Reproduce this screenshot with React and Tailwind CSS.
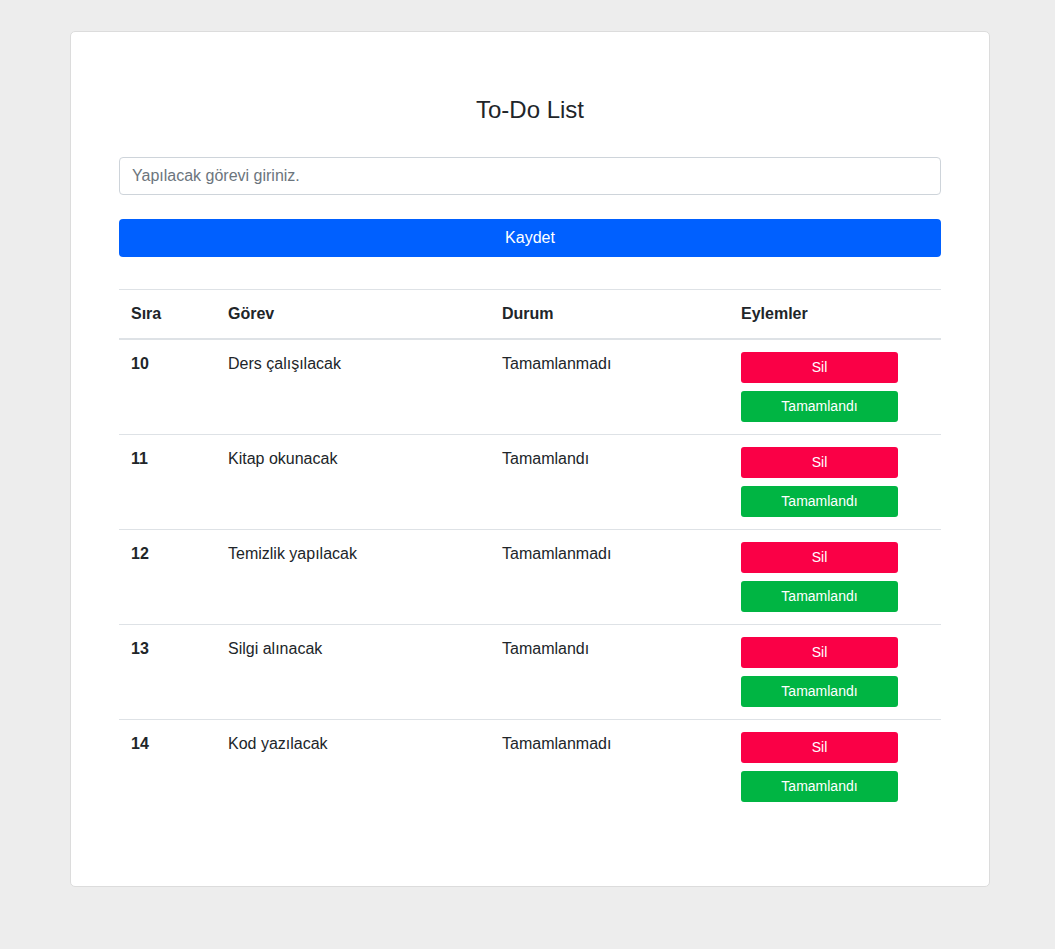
import React from 'react'

const todos = [
  { id: 10, task: 'Ders çalışılacak', status: 'Tamamlanmadı' },
  { id: 11, task: 'Kitap okunacak', status: 'Tamamlandı' },
  { id: 12, task: 'Temizlik yapılacak', status: 'Tamamlanmadı' },
  { id: 13, task: 'Silgi alınacak', status: 'Tamamlandı' },
  { id: 14, task: 'Kod yazılacak', status: 'Tamamlanmadı' },
]

const App = () => {
  return (
    <div
      className="min-h-screen bg-[#ededed] pt-[31px] pb-[63px] text-[#212529]"
      style={{ fontFamily: '"Liberation Sans", Arial, sans-serif' }}
    >
      <div className="ml-[70px] w-[920px] rounded-[5px] border border-[#dcdcdc] bg-white px-[48px] pt-[63px] pb-[72px]">
        <h4 className="text-center text-[24px] leading-[29px]">To-Do List</h4>

        <input
          className="mt-[33px] block h-[38px] w-full rounded-[4px] border border-[#ced4da] px-3 text-[16px] placeholder-[#6c757d] outline-none"
          placeholder="Yapılacak görevi giriniz."
        />

        <button className="mt-[24px] block h-[38px] w-full rounded-[4px] bg-[#0060ff] text-[16px] text-white">
          Kaydet
        </button>

        <table className="mt-[32px] w-full border-collapse text-[16px]">
          <thead>
            <tr className="border-t border-b-2 border-t-[#dee2e6] border-b-[#dee2e6] text-left">
              <th className="w-[97px] px-3 py-[12px] font-bold leading-6">Sıra</th>
              <th className="w-[274px] px-3 py-[12px] font-bold leading-6">Görev</th>
              <th className="w-[239px] px-3 py-[12px] font-bold leading-6">Durum</th>
              <th className="px-3 py-[12px] font-bold leading-6">Eylemler</th>
            </tr>
          </thead>
          <tbody>
            {todos.map((t, i) => (
              <tr key={t.id} className={i < todos.length - 1 ? 'border-b border-[#dee2e6]' : ''}>
                <td className="px-3 pt-[12px] pb-[12px] align-top font-bold leading-6">{t.id}</td>
                <td className="px-3 pt-[12px] pb-[12px] align-top leading-6">{t.task}</td>
                <td className="px-3 pt-[12px] pb-[12px] align-top leading-6">{t.status}</td>
                <td className="px-3 pt-[12px] pb-[12px] align-top">
                  <div className="flex w-[157px] flex-col gap-2">
                    <button className="h-[31px] rounded-[3px] bg-[#fa0046] text-[14px] text-white">Sil</button>
                    <button className="h-[31px] rounded-[3px] bg-[#00b543] text-[14px] text-white">Tamamlandı</button>
                  </div>
                </td>
              </tr>
            ))}
          </tbody>
        </table>
      </div>
    </div>
  )
}

export default App
